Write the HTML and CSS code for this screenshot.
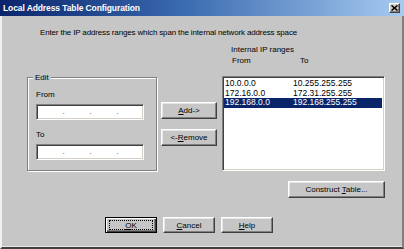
FILE: index.html
```html
<!DOCTYPE html>
<html>
<head>
<meta charset="utf-8">
<link rel="stylesheet" href="styles.css">
</head>
<body>
<div class="dialog">
  <div class="titlebar">
    <span class="title">Local Address Table Configuration</span>
    <span class="close-btn">
      <svg width="7" height="6" viewBox="0 0 7 6"><path d="M0.5 0.5 L6.5 5.5 M6.5 0.5 L0.5 5.5" stroke="#000" stroke-width="1.6"/></svg>
    </span>
  </div>
  <div class="client">
    <div class="intro">Enter the IP address ranges which span the internal network address space</div>
    <div class="middle">
      <div class="left">
        <div class="group">
          <span class="group-label">Edit</span>
          <div class="field-label">From</div>
          <div class="ip-input"><span class="seg"></span><span class="dot">.</span><span class="seg"></span><span class="dot">.</span><span class="seg"></span><span class="dot">.</span><span class="seg"></span></div>
          <div class="field-label to">To</div>
          <div class="ip-input"><span class="seg"></span><span class="dot">.</span><span class="seg"></span><span class="dot">.</span><span class="seg"></span><span class="dot">.</span><span class="seg"></span></div>
        </div>
      </div>
      <div class="mid-buttons">
        <div class="btn"><span><u>A</u>dd-&gt;</span></div>
        <div class="btn"><span>&lt;-<u>R</u>emove</span></div>
      </div>
      <div class="right">
        <div class="ranges-title">Internal IP ranges</div>
        <div class="col-heads"><span class="col1">From</span><span class="col2">To</span></div>
        <div class="listbox">
          <div class="row"><span class="col1">10.0.0.0</span><span class="col2">10.255.255.255</span></div>
          <div class="row"><span class="col1">172.16.0.0</span><span class="col2">172.31.255.255</span></div>
          <div class="row selected"><span class="col1">192.168.0.0</span><span class="col2">192.168.255.255</span></div>
        </div>
        <div class="btn construct"><span>Construct <u>T</u>able...</span></div>
      </div>
    </div>
    <div class="footer">
      <div class="btn default"><span class="focus"><u>O</u>K</span></div>
      <div class="btn"><span><u>C</u>ancel</span></div>
      <div class="btn"><span><u>H</u>elp</span></div>
    </div>
  </div>
</div>
</body>
</html>
```
FILE: styles.css
```css
html, body {
  margin: 0;
  padding: 0;
  background: #c6c6c6;
}
body {
  font-family: "Liberation Sans", Arial, sans-serif;
  font-size: 8px;
  line-height: 11px;
  color: #000;
}
.dialog {
  width: 404px;
  height: 249px;
  display: flex;
  flex-direction: column;
  overflow: hidden;
}
.titlebar {
  height: 16px;
  flex: none;
  background: linear-gradient(to right, #0a246a 0%, #3a6ab0 45%, #a6caf0 100%);
  display: flex;
  align-items: center;
  justify-content: space-between;
  padding: 0 4px 0 3px;
  box-sizing: border-box;
}
.title {
  color: #fff;
  font-weight: bold;
  font-size: 8.5px;
  letter-spacing: -0.1px;
}
.close-btn {
  width: 11px;
  height: 10px;
  box-sizing: border-box;
  background: #d4d0c8;
  border: 1px solid;
  border-color: #fff #404040 #404040 #fff;
  box-shadow: inset -1px -1px 0 #808080;
  display: flex;
  align-items: center;
  justify-content: center;
}
.close-btn svg { display: block; }
.client {
  flex: 1;
  border-left: 2px solid #f0f0f0;
  border-right: 2px solid #808080;
  border-bottom: 2px solid #404040;
  box-shadow: inset 0 -1px 0 #e8e8e8;
  display: flex;
  flex-direction: column;
}
.intro {
  margin: 11px 0 0 38px;
  letter-spacing: -0.15px;
}
.middle {
  display: flex;
  margin-top: 6px;
}
.left {
  margin: 33px 0 0 25px;
  width: 130px;
}
.group {
  height: 94px;
  box-sizing: border-box;
  border: 1px solid #808080;
  box-shadow: 1px 1px 0 #fff, inset 1px 1px 0 #fff;
  padding: 0 0 0 8px;
}
.group-label {
  display: block;
  width: max-content;
  margin: -6px 0 0 -3px;
  padding: 0 2px;
  background: #c6c6c6;
}
.field-label {
  margin-top: 6px;
}
.field-label.to {
  margin-top: 9px;
}
.ip-input {
  margin-top: 4px;
  width: 108px;
  height: 16px;
  box-sizing: border-box;
  background: #fff;
  border: 1px solid;
  border-color: #808080 #fff #fff #808080;
  box-shadow: inset 1px 1px 0 #404040, inset -1px -1px 0 #d4d0c8;
  display: flex;
  align-items: center;
  padding-left: 1px;
}
.seg {
  width: 24px;
  flex: none;
}
.dot {
  width: 3px;
  text-align: center;
  color: #404040;
  line-height: 8px;
}
.mid-buttons {
  margin: 58px 0 0 4px;
  width: 56px;
  display: flex;
  flex-direction: column;
  gap: 10px;
}
.btn {
  height: 17px;
  box-sizing: border-box;
  background: #c6c6c6;
  border: 1px solid;
  border-color: #fff #404040 #404040 #fff;
  box-shadow: inset -1px -1px 0 #808080, inset 1px 1px 0 #e6e6e6;
  display: flex;
  align-items: center;
  justify-content: center;
  white-space: pre;
}
.right {
  margin-left: 5px;
  width: 163px;
  display: flex;
  flex-direction: column;
}
.ranges-title {
  padding-left: 9px;
}
.col-heads {
  display: flex;
  padding-left: 10px;
}
.col-heads .col1 { width: 68px; }
.listbox {
  margin-top: 10px;
  height: 95px;
  box-sizing: border-box;
  background: #fff;
  border: 1px solid;
  border-color: #808080 #fff #fff #808080;
  box-shadow: inset 1px 1px 0 #404040, inset -1px -1px 0 #d4d0c8;
  padding: 2px 2px 0 1px;
}
.row {
  display: flex;
  height: 9.5px;
  line-height: 9.5px;
  font-size: 8.5px;
  padding-left: 1px;
}
.row .col1 { width: 68px; }
.row.selected {
  background: #0a246a;
  color: #fff;
}
.construct {
  margin: 10px 0 0 66px;
  width: 97px;
}
.footer {
  display: flex;
  gap: 6px;
  margin: 19px 0 0 103px;
}
.footer .btn {
  width: 52px;
  height: 16px;
}
.footer .btn.default {
  border-color: #000;
  box-shadow: inset 1px 1px 0 #fff, inset -1px -1px 0 #404040, inset -2px -2px 0 #808080;
}
.focus {
  display: flex;
  align-items: center;
  justify-content: center;
  width: 44px;
  height: 10px;
  border: 1px dotted #000;
  box-sizing: border-box;
}
```
